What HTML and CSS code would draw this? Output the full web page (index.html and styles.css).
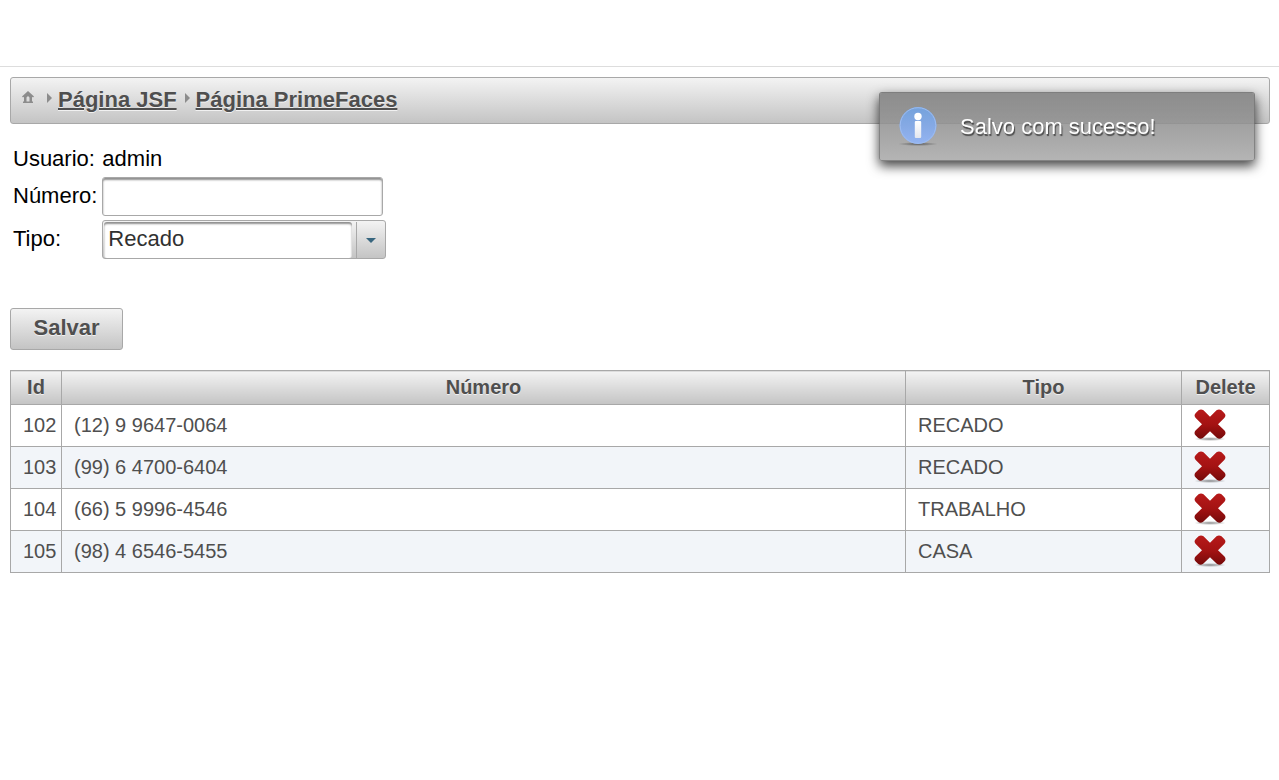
FILE: index.html
```html
<!DOCTYPE html>
<html lang="pt-BR">
<head>
<meta charset="utf-8">
<meta name="viewport" content="width=device-width, initial-scale=1">
<title>Telefones</title>
<link rel="stylesheet" href="styles.css">
</head>
<body>
<svg class="defs" width="0" height="0" aria-hidden="true">
  <defs>
    <linearGradient id="red" x1="0" y1="0" x2="0" y2="32" gradientUnits="userSpaceOnUse">
      <stop offset="0" stop-color="#b81a1a"/><stop offset=".5" stop-color="#a31212"/><stop offset="1" stop-color="#6c0808"/>
    </linearGradient>
    <radialGradient id="ground">
      <stop offset="0" stop-color="#000" stop-opacity=".45"/><stop offset="1" stop-color="#000" stop-opacity="0"/>
    </radialGradient>
    <symbol id="cross" viewBox="0 0 32 32">
      <ellipse cx="16" cy="30" rx="16" ry="2" fill="url(#ground)"/>
      <path d="M9.500 1.300 16 7.800 22.500 1.300Q25 -.2 27.500 1.300L30.200 4Q32.500 6.500 30.500 8.800L24 15.200 30.500 21.500Q32.500 24 30.500 26.300L28 28.800Q25.500 30.800 22.800 28.800L16 22.200 9.200 28.800Q6.500 30.800 4 28.800L1.500 26.300Q-.5 24 1.500 21.500L8 15.200 1.500 8.800Q-.5 6.500 1.800 4L4.500 1.300Q7 -.2 9.500 1.300Z" fill="url(#red)"/>
    </symbol>
  </defs>
</svg>
<header class="top"></header>
<main class="page">
  <nav class="breadcrumb" aria-label="Navegação">
    <a class="home" href="#" aria-label="Início">
      <svg width="12" height="12" viewBox="0 0 12 12"><path d="M6 0 0 5.500 1 6.500 2 5.700V10.500H1V12h10v-1.500h-1V5.700l1 .8 1-1zM4.500 10.500V6.400L6 5l1.500 1.400v4.100z" fill="#8c8c8c" fill-rule="evenodd"/></svg>
    </a>
    <svg class="chevron" width="5" height="10" viewBox="0 0 5 10"><path d="M0 0 5 5 0 10z"/></svg>
    <a class="crumb" href="#">Página JSF</a>
    <svg class="chevron" width="5" height="10" viewBox="0 0 5 10"><path d="M0 0 5 5 0 10z"/></svg>
    <a class="crumb" href="#">Página PrimeFaces</a>
  </nav>

  <form class="form">
    <div class="fields">
      <span class="label">Usuario:</span>
      <span class="label">admin</span>
      <label class="label" for="numero">Número:</label>
      <input class="text-input" id="numero" type="text">
      <label class="label" for="tipo">Tipo:</label>
      <div class="select-box">
        <select class="select" id="tipo">
          <option>Recado</option>
          <option>Trabalho</option>
          <option>Casa</option>
        </select>
        <span class="trigger"><svg width="10" height="5" viewBox="0 0 10 5"><path d="M0 0h10L5 5z" fill="#38667f"/></svg></span>
      </div>
    </div>
    <button class="button" type="button">Salvar</button>
  </form>

  <table class="grid">
    <colgroup><col class="col-id"><col><col class="col-type"><col class="col-delete"></colgroup>
    <thead>
      <tr><th>Id</th><th>Número</th><th>Tipo</th><th>Delete</th></tr>
    </thead>
    <tbody>
      <tr><td>102</td><td>(12) 9 9647-0064</td><td>RECADO</td><td><button class="delete" type="button" aria-label="Excluir 102"><svg width="32" height="32"><use href="#cross"/></svg></button></td></tr>
      <tr><td>103</td><td>(99) 6 4700-6404</td><td>RECADO</td><td><button class="delete" type="button" aria-label="Excluir 103"><svg width="32" height="32"><use href="#cross"/></svg></button></td></tr>
      <tr><td>104</td><td>(66) 5 9996-4546</td><td>TRABALHO</td><td><button class="delete" type="button" aria-label="Excluir 104"><svg width="32" height="32"><use href="#cross"/></svg></button></td></tr>
      <tr><td>105</td><td>(98) 4 6546-5455</td><td>CASA</td><td><button class="delete" type="button" aria-label="Excluir 105"><svg width="32" height="32"><use href="#cross"/></svg></button></td></tr>
    </tbody>
  </table>
</main>

<div class="growl" role="status">
  <svg width="40" height="40" viewBox="0 0 40 40" aria-hidden="true">
    <defs>
      <linearGradient id="blue" x1="0" y1="0" x2="0" y2="1"><stop offset="0" stop-color="#74a2dc"/><stop offset=".5" stop-color="#85a9e4"/><stop offset="1" stop-color="#94b4f2"/></linearGradient>
      <linearGradient id="stem" x1="0" y1="0" x2="0" y2="1"><stop offset="0" stop-color="#fff"/><stop offset="1" stop-color="#e3e6ee"/></linearGradient>
    </defs>
    <ellipse cx="20" cy="37" rx="20" ry="2" fill="url(#ground)"/>
    <circle cx="20" cy="18.500" r="18.500" fill="url(#blue)"/>
    <circle cx="20" cy="18.500" r="17.800" fill="none" stroke="#9dbcf0" stroke-width="1"/>
    <circle cx="20" cy="9.500" r="3.700" fill="#fff"/>
    <rect x="16.800" y="14" width="6.400" height="17" rx="1" fill="url(#stem)"/>
  </svg>
  <span>Salvo com sucesso!</span>
</div>
</body>
</html>
```
FILE: styles.css
```css
* {
  box-sizing: border-box;
}

body {
  margin: 0;
  background: #fff;
  color: #000;
  font: 22px/26px "Liberation Sans", Arial, sans-serif;
}

.defs {
  position: absolute;
}

.top {
  height: 67px;
  border-bottom: 1px solid #ddd;
}

.page {
  padding: 10px 9px 10px 10px;
}

.breadcrumb {
  display: flex;
  align-items: center;
  height: 47px;
  padding: 0 11px;
  border: 1px solid #a8a8a8;
  border-radius: 3px;
  background: linear-gradient(#f3f3f3, #c4c4c4);
}

.home {
  display: flex;
  margin-right: 13px;
  padding-bottom: 7px;
}

.chevron {
  margin: 0 6px 5px 0;
  fill: #8c8c8c;
}

.crumb {
  margin-right: 8px;
  padding-bottom: 1px;
  color: #4f4f4f;
  font-weight: 700;
  text-decoration-thickness: 2px;
  text-shadow: 0 1px 0 rgba(255, 255, 255, .7);
}

.fields {
  display: grid;
  grid-template-columns: max-content max-content;
  align-items: center;
  gap: 4px 5px;
  margin-top: 22px;
  padding-left: 3px;
}

.label {
  padding-bottom: 1px;
}

.text-input {
  width: 281px;
  height: 39px;
  padding: 4px;
  border: 1px solid #a8a8a8;
  border-radius: 3px;
  background: #fff;
  box-shadow: inset 0 2px 2px #8f8f8f;
  color: #313131;
  font: inherit;
}

.select-box {
  display: flex;
  position: relative;
  width: 284px;
  height: 39px;
  padding: 1px 0 0 1px;
  border: 1px solid #a8a8a8;
  border-radius: 3px;
  background: linear-gradient(#f3f3f3, #c4c4c4);
}

.select {
  width: 248px;
  padding: 0 4px 3px;
  appearance: none;
  border: 0;
  border-radius: 3px;
  background: #fff;
  box-shadow: inset 0 2px 2px #8f8f8f;
  color: #313131;
  font: inherit;
}

.trigger {
  display: flex;
  flex: 1;
  align-items: center;
  justify-content: center;
  margin-left: 4px;
  border-left: 1px solid #a8a8a8;
  pointer-events: none;
}

.button {
  display: block;
  min-width: 113px;
  height: 42px;
  margin: 49px 0 20px;
  padding: 0 22px 2px;
  border: 1px solid #a8a8a8;
  border-radius: 3px;
  background: linear-gradient(#f3f3f3, #c4c4c4);
  color: #4f4f4f;
  font: 700 22px/26px "Liberation Sans", Arial, sans-serif;
  text-shadow: 0 1px 0 rgba(255, 255, 255, .7);
}

.grid {
  width: 100%;
  table-layout: fixed;
  border-collapse: collapse;
  color: #4f4f4f;
  font-size: 20px;
  line-height: 24px;
}

.col-id {
  width: 51px;
}

.col-type {
  width: 276px;
}

.col-delete {
  width: 88px;
}

.grid th,
.grid td {
  border: 1px solid #a8a8a8;
}

.grid th {
  height: 34px;
  padding: 0 0 2px;
  background: linear-gradient(#f3f3f3, #c4c4c4);
  text-shadow: 0 1px 0 rgba(255, 255, 255, .7);
}

.grid td {
  height: 42px;
  padding: 0 0 2px 12px;
}

.grid tbody tr:nth-child(even) {
  background: #f2f5f9;
}

.delete {
  display: block;
  padding: 0;
  border: 0;
  background: none;
}

.delete svg {
  display: block;
}

.growl {
  display: flex;
  position: fixed;
  top: 92px;
  right: 24px;
  align-items: center;
  gap: 22px;
  width: 376px;
  height: 69px;
  padding: 0 18px;
  border: 1px solid rgba(100, 100, 100, .8);
  border-radius: 3px;
  background: linear-gradient(rgba(125, 125, 125, .85), rgba(167, 167, 167, .85)) padding-box;
  box-shadow: 0 5px 12px rgba(0, 0, 0, .75);
  color: #fff;
  text-shadow: 1px 2px 1px rgba(50, 50, 50, .8);
}
```
